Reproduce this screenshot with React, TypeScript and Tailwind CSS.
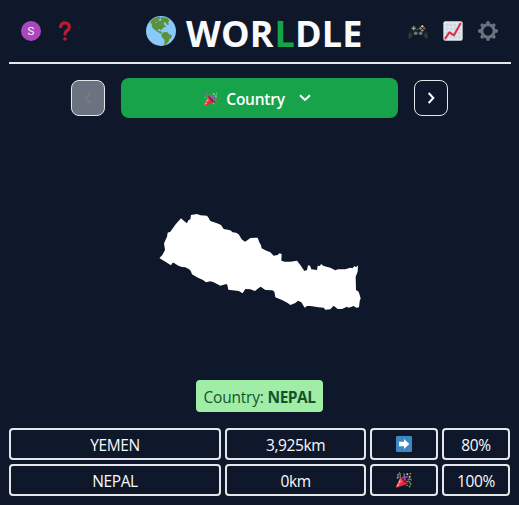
import React from "react";

const Globe = () => (
  <svg className="h-[30px] w-[30px]" viewBox="0 0 90 90">
    <circle cx="45" cy="45" r="45" fill="#88c9f9" />
    <path fill="#5c913b" d="M12 19 21 9 32 4 43 2 41 6 49 4 60 5 67 8 70 14 66 18 69 25 63 27 59 19 53 20 55 27 61 32 54 34 49 39 44 43 40 39 34 42 39 46 45 46 48 50 45 53 39 50 31 45 24 40 18 33 17 23Z" />
    <path fill="#5c913b" d="M49 51 56 48 65 49 68 54 77 58 77 64 70 70 68 77 58 86 54 88 56 77 54 70 48 64 46 58Z" />
    <path fill="#88c9f9" d="m42 7 5 3-3 4-7 0zM28 17l6 1-4 3z" />
  </svg>
);

const Party = ({ className }: { className: string }) => (
  <svg className={className} viewBox="0 0 48 48">
    <path fill="#dd2e44" d="M14 14 36 35 2 47 1 43Z" />
    <path fill="#ea596e" d="m14 14 9 9L2 47 1 43Z" />
    <path fill="#a0041e" d="M14 14c5-3 24 17 22 21-5 2-24-15-22-21Z" />
    <path fill="#ffcc4d" d="m9 25 5 5-5 2zM5 36l5 4-7 3z" />
    <g fill="none" strokeWidth="4">
      <path stroke="#9266cc" d="M19 18c7-2 8-8 4-14M28 25c-4-7 0-12 7-10M3 10l6-4" />
      <path stroke="#5c913b" d="M9 1c6 4 3 9 4 16M31 30c5-5 10-3 11 4l4 4M5 10l3 8" />
      <path stroke="#9266cc" d="m35 23 6-3 6 5" />
    </g>
    <g fill="#ffcc4d">
      <circle cx="34" cy="7" r="3" />
      <circle cx="43" cy="5" r="2" />
      <circle cx="41" cy="14" r="3" />
      <circle cx="33" cy="40" r="2" />
      <circle cx="4" cy="18" r="2" />
    </g>
    <path fill="#5c913b" d="m41 39 4 2-4 6-4-2z" />
  </svg>
);

const Gamepad = () => (
  <svg className="h-5 w-5" viewBox="0 0 60 60">
    <path fill="#31373d" d="M7 26 1 43v8q2 4 6 1l10-12h26l10 12q4 3 6-1v-8l-6-17z" />
    <path fill="#181d21" d="M8 15q8-7 17 0h10q9-7 17 0l4 15-9 13-9-2H22l-9 2-9-13z" />
    <circle cx="17" cy="22" r="7" fill="#31373d" />
    <path d="M17 16v12M11 22h12" stroke="#8899a6" strokeWidth="4" />
    <circle cx="23" cy="37" r="5.5" fill="#66757f" />
    <circle cx="38" cy="37" r="5.5" fill="#66757f" />
    <circle cx="43" cy="16" r="3.5" fill="#ffcc4d" />
    <circle cx="37" cy="22" r="3.5" fill="#55acee" />
    <circle cx="49" cy="22" r="3.5" fill="#dd2e44" />
    <circle cx="43" cy="28" r="3.5" fill="#77b255" />
    <circle cx="28" cy="25" r="2" fill="#8899a6" />
  </svg>
);

const Chart = () => (
  <svg className="h-5 w-5" viewBox="0 0 60 60">
    <rect x="1" y="1" width="58" height="58" rx="6" fill="#e1e8ed" />
    <path stroke="#c2ced6" strokeWidth="2" d="M6 12h48M6 24h48M6 36h48M6 48h48M12 6v48M24 6v48M36 6v48M48 6v48" />
    <path fill="none" stroke="#dd2e44" strokeWidth="6" strokeLinecap="round" strokeLinejoin="round" d="m7 52 12-18 14 9L52 8" />
  </svg>
);

const teeth = [0, 45, 90, 135, 180, 225, 270, 315];
const Gear = () => (
  <svg className="h-5 w-5" viewBox="0 0 60 60">
    <circle cx="30" cy="30" r="18.5" fill="none" stroke="#66757f" strokeWidth="9" />
    {teeth.map((a) => (
      <path key={a} fill="#66757f" d="M25 11V2q5-4 10 0v9z" transform={`rotate(${a} 30 30)`} />
    ))}
  </svg>
);

const Nepal = () => (
  <svg className="h-[110px] w-[210px]" viewBox="0 0 630 330">
    <path transform="translate(-14)" fill="white" d="M28 158 36 150 44 135 41 115 50 95 52 83 60 80 76 58 92 40 102 49 110 55 114 46 120 43 122 30 140 27 150 31 170 32 175 39 180 48 200 55 212 60 220 72 240 76 247 82 257 83 265 88 274 103 284 110 292 105 300 99 322 98 327 112 332 121 334 130 345 136 360 142 370 152 382 150 387 145 394 147 393 167 403 170 420 170 440 167 450 180 462 198 470 195 473 181 479 182 483 193 500 195 502 182 509 183 512 177 520 183 540 188 555 196 563 193 585 193 600 188 606 190 612 184 618 186 623 181 622 200 616 215 617 255 625 260 631 280 628 289 626 307 618 308 610 303 595 308 590 305 575 312 562 312 550 302 540 313 525 314 520 308 505 307 480 303 470 303 463 308 453 292 443 287 435 294 420 300 412 294 395 285 375 277 372 260 366 256 345 255 331 245 325 249 314 258 300 253 285 252 277 265 265 258 234 254 231 240 228 237 210 242 190 232 180 229 167 232 158 225 140 217 125 208 121 197 115 192 105 187 95 186 84 182 70 173 66 174 62 181 45 170 28 160Z" />
  </svg>
);

const Arrow = () => (
  <svg className="h-4 w-4" viewBox="0 0 48 48">
    <rect width="48" height="48" rx="4" fill="#3b88c3" />
    <path fill="white" d="M9 17h15V9l16 15-16 15v-8H9z" />
  </svg>
);

const guesses = [
  { name: "YEMEN", distance: "3,925km", icon: <Arrow />, pct: "80%" },
  { name: "NEPAL", distance: "0km", icon: <Party className="h-4 w-4" />, pct: "100%" },
];

const Cell = ({ children }: { children: React.ReactNode }) => (
  <div className="flex h-8 items-center justify-center rounded border-2 border-gray-200 pt-1">{children}</div>
);

export default function App() {
  return (
    <div className="h-[505px] w-[519px] overflow-hidden bg-[#0f172a] pr-2 pl-[9px] font-['Open_Sans','Noto_Sans',sans-serif] text-base text-slate-50">
      <header className="flex h-16 items-center justify-between border-b-2 border-gray-200 pr-[13px] pl-3">
        <div className="flex w-[125px] items-center gap-[18px]">
          <span className="flex h-5 w-5 items-center justify-center rounded-full bg-[#ab47bc] pt-px font-[Roboto] text-[11.5px]">S</span>
          <svg className="h-5 w-[12px]" viewBox="0 0 36 60">
            <path d="M5 17C6 2 31 2 31 18c0 12-13 10-13 21" fill="none" stroke="#be1931" strokeWidth="10" strokeLinecap="round" />
            <circle cx="18" cy="54" r="5.5" fill="#be1931" />
          </svg>
        </div>
        <h1 className="flex flex-1 items-center gap-[10px] text-4xl leading-10 font-bold">
          <Globe />
          <span className="pt-1.5 tracking-[0.1px] whitespace-nowrap">WOR<span className="ml-px text-[#16a34a]">L</span>DLE</span>
        </h1>
        <div className="flex items-center gap-[15px]">
          <Gamepad />
          <Chart />
          <Gear />
        </div>
      </header>

      <nav className="mt-3.5 flex items-center gap-4 pl-[62px]">
        <button className="flex h-9 w-[34px] items-center justify-center rounded-lg border border-gray-200 bg-[#6b7280]">
          <svg className="h-3 w-2" viewBox="0 0 24 36" fill="none" stroke="#7c7c7c" strokeWidth="6"><path d="M19 3 5 18l14 15" /></svg>
        </button>
        <button className="flex h-10 w-[277px] items-center justify-center rounded-lg bg-[#16a34a] pr-1 font-semibold text-white">
          <Party className="mt-0.5 mr-2 h-3.5 w-3.5" />
          <span className="pt-1 text-[15.5px] tracking-[-0.25px]">Country</span>
          <svg className="ml-3.5 h-2 w-3" viewBox="0 0 36 24" fill="none" stroke="white" strokeWidth="6"><path d="m3 4 15 14L33 4" /></svg>
        </button>
        <button className="flex h-9 w-[34px] items-center justify-center rounded-lg border border-gray-200">
          <svg className="h-3 w-2" viewBox="0 0 24 36" fill="none" stroke="white" strokeWidth="6"><path d="m5 3 14 15L5 33" /></svg>
        </button>
      </nav>

      <div className="mt-[87px] pl-[146px]"><Nepal /></div>

      <div className="mt-[65px] ml-[187px] flex h-8 w-[127px] items-center justify-center rounded bg-[#a0eda8] pt-1 text-[15.5px] tracking-[-0.2px] whitespace-pre text-[#14532d]">
        Country: <b className="font-bold tracking-[-0.5px]">NEPAL</b>
      </div>

      <div className="mt-4 grid grid-cols-[212px_141px_68px_68px] gap-1 text-[15.5px] tracking-[-0.4px]">
        {guesses.map((g) => (
          <React.Fragment key={g.name}>
            <Cell>{g.name}</Cell>
            <Cell>{g.distance}</Cell>
            <div className="flex h-8 items-center justify-center rounded border-2 border-gray-200">{g.icon}</div>
            <Cell>{g.pct}</Cell>
          </React.Fragment>
        ))}
      </div>
    </div>
  );
}
